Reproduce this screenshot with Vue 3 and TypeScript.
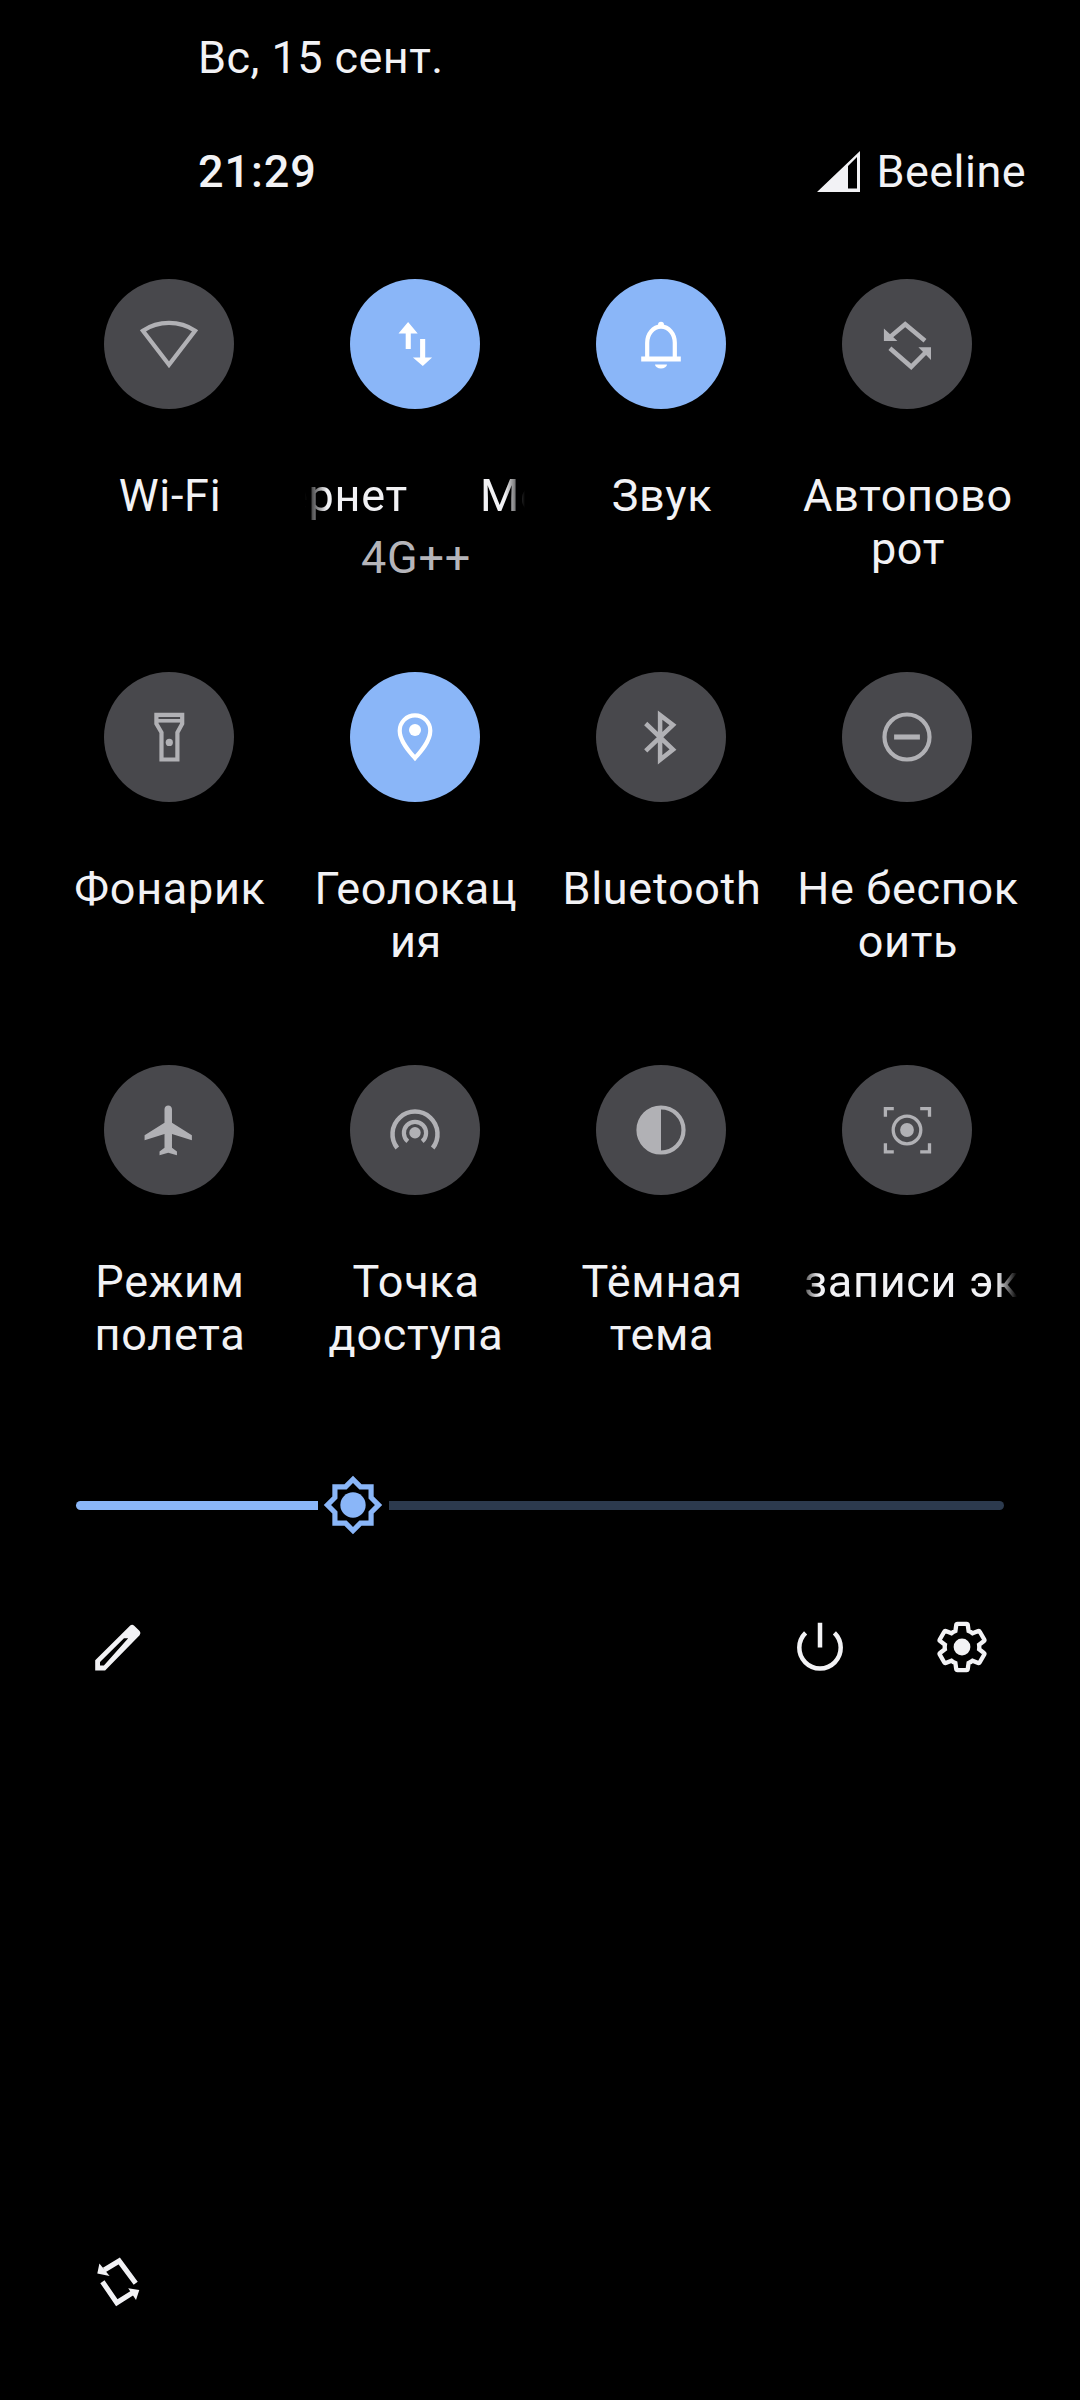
<template>
  <div class="shade">
    <div class="date">Вс, 15 сент.</div>
    <div class="status">
      <span class="clock">21:29</span>
      <svg class="signal" width="43" height="41" viewBox="0 0 43 41">
        <path fill="currentColor" fill-rule="evenodd" d="M43 0V41H0ZM31 15V37.5H40V6Z" />
      </svg>
      <span class="carrier">Beeline</span>
    </div>

    <div class="tiles">
      <div v-for="tile in tiles" :key="tile.icon" class="tile">
        <div class="circle" :class="{ on: tile.on }">
          <svg class="icon" viewBox="0 0 24 24" fill="none" stroke="currentColor">
            <path v-if="tile.icon === 'wifi'" stroke-width="1.4" d="M12 18.9 3.3 7.6C8.4 4.1 15.6 4.1 20.7 7.6Z" />
            <g v-else-if="tile.icon === 'data'" fill="currentColor" stroke="none">
              <path d="M9.7 4.7 12.9 8.5H10.6V13.7H8.9V8.5H6.5Z" />
              <path d="M14.6 19.3 11.3 16.5H13.7V10.3H15.4V16.5H17.7Z" />
            </g>
            <g v-else-if="tile.icon === 'bell'">
              <path stroke-width="1.4" d="M7.4 16.6V11.6C7.4 8.6 9.4 6.2 12 6.2S16.6 8.6 16.6 11.6V16.6" />
              <circle cx="12" cy="5.6" r="1" fill="currentColor" stroke="none" />
              <path fill="currentColor" stroke="none" d="M5.4 16.2H18.6V17.8H5.4ZM10 18.8H14A2 1.4 0 0 1 10 18.8Z" />
            </g>
            <g v-else-if="tile.icon === 'rotate'">
              <path stroke-width="1.5" d="M18 10.9 11.4 5.4 6.2 9.8M6.3 13.4 13.4 19.6 18 15" />
              <path fill="currentColor" stroke="none" d="M4.3 6.8V11H8.8ZM20 13.1V17.3L15.8 13.1Z" />
            </g>
            <g v-else-if="tile.icon === 'torch'">
              <path stroke-width="1.4" d="M7.8 4.6H16.4V7.6L14.8 10.5V19.5H9.5V10.5L7.8 7.6Z" />
              <path stroke-width="1.2" d="M8 6.6H16.2" />
              <circle cx="12.1" cy="13.8" r="1.2" fill="currentColor" stroke="none" />
            </g>
            <g v-else-if="tile.icon === 'pin'">
              <path stroke-width="1.4" d="M12 19C10.2 17 6.9 13.4 6.9 9.9A5.1 5.1 0 0 1 17.1 9.9C17.1 13.4 13.8 17 12 19Z" />
              <circle cx="12" cy="9.7" r="2" fill="currentColor" stroke="none" />
            </g>
            <path v-else-if="tile.icon === 'bluetooth'" stroke-width="1.5" d="M6.9 7.5 16 16.2 11.7 19.6V4.7L16 8 6.9 16.6" />
            <g v-else-if="tile.icon === 'dnd'">
              <circle cx="12" cy="12" r="7.5" stroke-width="1.4" />
              <path stroke-width="1.7" d="M7.7 12H16.3" />
            </g>
            <path v-else-if="tile.icon === 'plane'" fill="currentColor" stroke="none" transform="translate(2.2 2.14) scale(.83)" d="M21 16v-2l-8-5V3.5c0-.83-.67-1.5-1.5-1.5S10 2.67 10 3.5V9l-8 5v2l8-2.5V19l-2 1.5V22l3.5-1 3.5 1v-1.5L13 19v-5.5l8 2.5z" />
            <g v-else-if="tile.icon === 'hotspot'">
              <circle cx="12" cy="12.9" r="1.9" fill="currentColor" stroke="none" />
              <path stroke-width="1.4" d="M9.6 15.8A3.7 3.7 0 1 1 14.4 15.8" />
              <path stroke-width="1.5" d="M6.1 18A7.5 7.5 0 1 1 17.9 18" />
            </g>
            <g v-else-if="tile.icon === 'contrast'">
              <circle cx="12" cy="12" r="7.5" stroke-width="1.4" />
              <path fill="currentColor" stroke="none" d="M12 4.5A7.5 7.5 0 0 0 12 19.5Z" />
            </g>
            <g v-else-if="tile.icon === 'record'">
              <path stroke-width="1.1" d="M4.8 7.6V4.9H7.6M16.4 4.9H19.5V7.6M4.8 16.4V19.3H7.6M16.4 19.3H19.5V16.4" />
              <circle cx="12" cy="12" r="4.6" stroke-width="1.1" />
              <circle cx="12" cy="12" r="2.3" fill="currentColor" stroke="none" />
            </g>
          </svg>
        </div>
        <div v-if="tile.icon === 'data'" class="label marquee">
          <div class="scroll scroll-data"><span>Интернет</span><span>Мобильный</span></div>
        </div>
        <div v-else-if="tile.icon === 'record'" class="label marquee">
          <div class="scroll scroll-record"><span>Начало записи экрана</span></div>
        </div>
        <div v-else class="label">
          <div v-for="line in tile.lines" :key="line">{{ line }}</div>
        </div>
        <div v-if="tile.sub" class="sub">{{ tile.sub }}</div>
      </div>
    </div>

    <div class="slider">
      <div class="track filled"></div>
      <svg class="thumb" viewBox="0 0 24 24">
        <path fill="#8ab6f8" fill-rule="evenodd" d="M20 8.69V4h-4.69L12 .69 8.69 4H4v4.69L.69 12 4 15.31V20h4.69L12 23.31 15.31 20H20v-4.69L23.31 12 20 8.69zM18 14.48V18h-3.52L12 20.48 9.52 18H6v-3.52L3.52 12 6 9.52V6h3.52L12 3.52 14.48 6H18v3.52L20.48 12 18 14.48z" />
        <circle cx="12" cy="12" r="4.9" fill="#8ab6f8" />
      </svg>
      <div class="track rest"></div>
    </div>

    <div class="actions">
      <svg class="icon" viewBox="0 0 24 24">
        <path fill="currentColor" fill-rule="evenodd" d="M4.4 16.4 16 4.9Q16.7 4.3 17.4 4.9L19.2 6.7Q19.8 7.4 19.2 8.1L7.7 19.8H4.4ZM6 17 14 9.1 15.4 9.1 7.3 18.2H6Z" />
      </svg>
      <div class="spacer"></div>
      <svg class="icon" viewBox="0 0 24 24" fill="none" stroke="currentColor" stroke-width="1.5">
        <path d="M7.2 7.3A6.9 6.9 0 1 0 16.8 7.3M12 3.9V12.2" />
      </svg>
      <svg class="icon gear" viewBox="0 0 24 24">
        <path fill="none" stroke="currentColor" stroke-width="1.8" transform="translate(2.4 2.4) scale(.8)" d="M19.14 12.94c.04-.3.06-.61.06-.94 0-.32-.02-.64-.07-.94l2.03-1.58c.18-.14.23-.41.12-.61l-1.92-3.32c-.12-.22-.37-.29-.59-.22l-2.39.96c-.5-.38-1.03-.7-1.62-.94l-.36-2.54c-.04-.24-.24-.41-.48-.41h-3.84c-.24 0-.43.17-.47.41l-.36 2.54c-.59.24-1.13.57-1.62.94l-2.39-.96c-.22-.08-.47 0-.59.22L2.74 8.87c-.12.21-.08.47.12.61l2.03 1.58c-.05.3-.09.63-.09.94s.02.64.07.94l-2.03 1.58c-.18.14-.23.41-.12.61l1.92 3.32c.12.22.37.29.59.22l2.39-.96c.5.38 1.03.7 1.62.94l.36 2.54c.05.24.24.41.48.41h3.84c.24 0 .44-.17.47-.41l.36-2.54c.59-.24 1.13-.56 1.62-.94l2.39.96c.22.08.47 0 .59-.22l1.92-3.32c.12-.22.07-.47-.12-.61l-2.01-1.58z" />
        <circle cx="12" cy="12" r="2.8" fill="currentColor" />
      </svg>
    </div>

    <svg class="icon turn" viewBox="0 0 24 24" fill="none" stroke="currentColor" stroke-width="1.7">
      <path d="M17.9 12.4 12.4 5 7.4 8M6.8 11.9 11.6 18.9 16.8 15.6" />
      <path fill="currentColor" stroke="none" d="M5.1 9.2 5.8 5.8 9.2 10ZM19.1 14.7 15.4 14.1 18 18Z" />
    </svg>
  </div>
</template>

<script setup lang="ts">
interface Tile {
  icon: string
  lines: string[]
  on?: boolean
  sub?: string
}

const tiles: Tile[] = [
  { icon: 'wifi', lines: ['Wi-Fi'] },
  { icon: 'data', lines: [], on: true, sub: '4G++' },
  { icon: 'bell', lines: ['Звук'], on: true },
  { icon: 'rotate', lines: ['Автопово', 'рот'] },
  { icon: 'torch', lines: ['Фонарик'] },
  { icon: 'pin', lines: ['Геолокац', 'ия'], on: true },
  { icon: 'bluetooth', lines: ['Bluetooth'] },
  { icon: 'dnd', lines: ['Не беспок', 'оить'] },
  { icon: 'plane', lines: ['Режим', 'полета'] },
  { icon: 'hotspot', lines: ['Точка', 'доступа'] },
  { icon: 'contrast', lines: ['Тёмная', 'тема'] },
  { icon: 'record', lines: [] },
]
</script>

<style>
html,
body {
  background: #000;
}
</style>

<style scoped>
.shade {
  width: 1080px;
  height: 2400px;
  overflow: hidden;
  padding-top: 31px;
  box-sizing: border-box;
  background: #000;
  color: #f2f2f5;
  font-family: Roboto, "Liberation Sans", sans-serif;
  font-size: 45px;
  line-height: 53px;
  letter-spacing: 0.45px;
}

.date {
  padding-left: 198px;
}

.status {
  display: flex;
  margin-top: 61px;
  padding: 0 54px 0 198px;
}

.clock {
  flex: 1;
  font-weight: 500;
  letter-spacing: 0.9px;
}

.signal {
  margin: 6px 16px 0 0;
}

.tiles {
  display: grid;
  grid-template-columns: repeat(4, 246px);
  grid-auto-rows: 393px;
  margin-top: 81px;
  padding-left: 46px;
  letter-spacing: 0.7px;
}

.tile {
  display: flex;
  flex-direction: column;
  align-items: center;
  text-align: center;
}

.circle {
  display: flex;
  align-items: center;
  justify-content: center;
  width: 130px;
  height: 130px;
  border-radius: 50%;
  background: #48484c;
  color: #b1b1b5;
}

.circle.on {
  background: #8ab6f8;
  color: #fff;
}

.icon {
  display: block;
  width: 72px;
  height: 72px;
}

.label {
  margin: 60px 0 0 2px;
  white-space: nowrap;
}

.marquee {
  width: 220px;
  margin-left: 0;
  overflow: hidden;
  text-align: left;
  -webkit-mask-image: linear-gradient(to right, transparent, #000 22px, #000 200px, transparent);
  mask-image: linear-gradient(to right, transparent, #000 22px, #000 200px, transparent);
}

.scroll {
  display: flex;
  gap: 72px;
}

.scroll-data {
  margin-left: -101px;
}

.scroll-record {
  margin-left: -166px;
}

.sub {
  margin: 9px 0 0 2px;
  color: #b5b5ba;
}

.slider {
  display: flex;
  align-items: center;
  height: 62px;
  margin-top: 16px;
  padding-left: 76px;
}

.track {
  height: 9px;
}

.filled {
  width: 242px;
  border-radius: 5px 0 0 5px;
  background: #8ab6f8;
}

.thumb {
  width: 62px;
  height: 62px;
  margin: 0 5px 0 4px;
}

.rest {
  width: 615px;
  border-radius: 0 5px 5px 0;
  background: #2c3a4e;
}

.actions {
  display: flex;
  margin-top: 75px;
  padding: 0 82px;
}

.spacer {
  flex: 1;
}

.gear {
  margin-left: 70px;
}

.turn {
  margin: 563px 0 0 82px;
}
</style>
